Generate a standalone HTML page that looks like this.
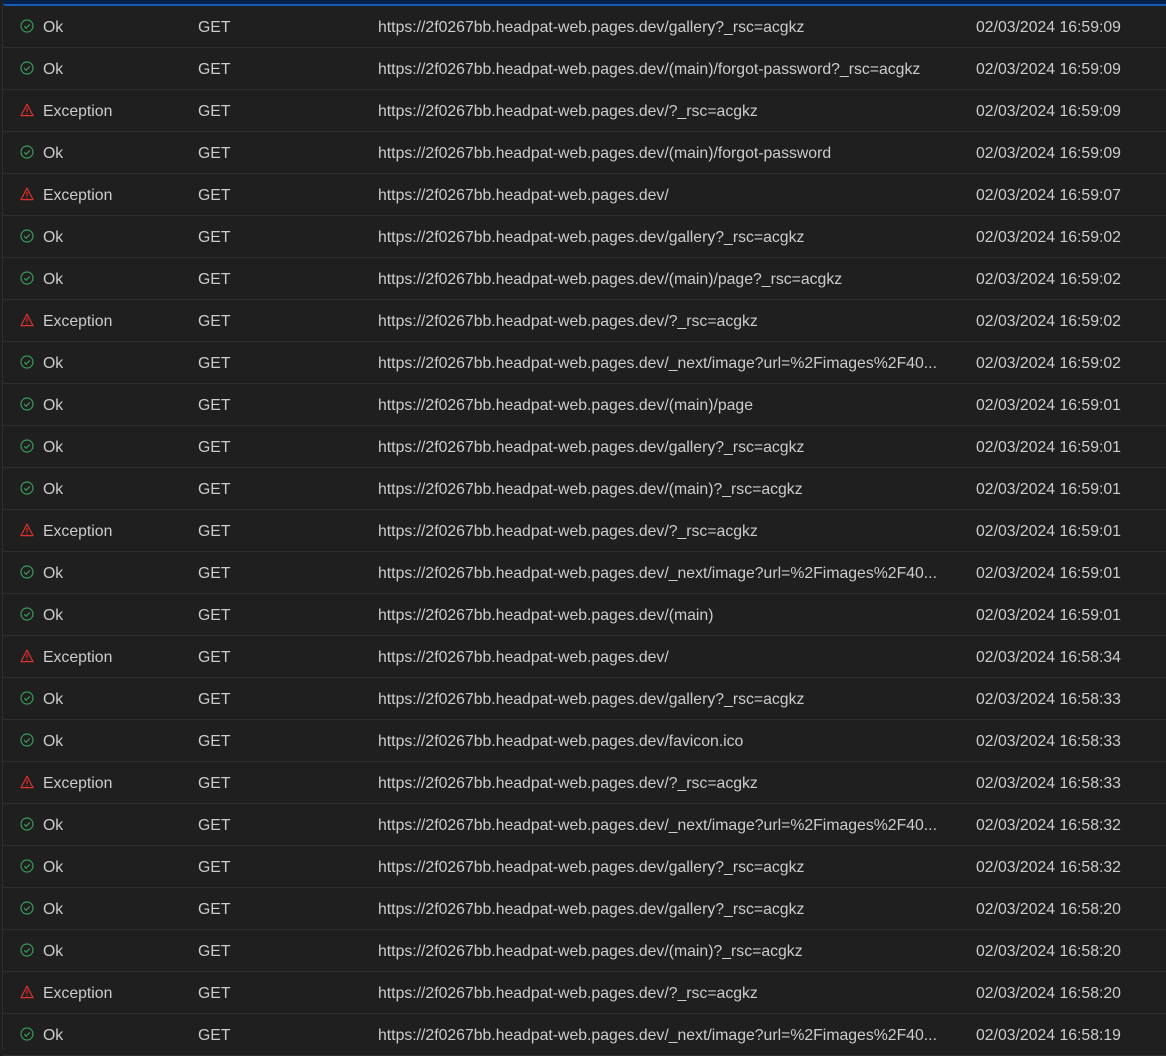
<!DOCTYPE html>
<html><head><meta charset="utf-8"><style>
*{margin:0;padding:0;box-sizing:border-box}
body{width:1166px;height:1049px;overflow:hidden;background:#1f1f1f;font-family:"Liberation Sans",sans-serif;font-size:15.8px;color:#cccccc;position:relative}
.top{position:absolute;left:3px;right:0;top:0;height:6px;background:#04214a;border-bottom:2px solid #1e5bb8;border-bottom-left-radius:3px}
.vl{position:absolute;left:2px;top:6px;bottom:0;width:1px;background:#2e2e2e}
.row{position:absolute;left:3px;right:0;height:42px;border-bottom:1px solid #2e2e2e}
.row span{position:absolute;top:13px;white-space:nowrap}
.ic{position:absolute;left:17px;top:13px;width:14px;height:14px}
</style></head><body>
<div class="top"></div><div class="vl"></div>
<div id="rows"></div>
<script>
var ok='<svg class="ic" viewBox="0 0 14 14"><circle cx="7" cy="7" r="6" fill="none" stroke="#3a9a5a" stroke-width="1.2"/><path d="M4.2 7.2l2 2 3.6-3.8" fill="none" stroke="#3a9a5a" stroke-width="1.2"/></svg>';
var ex='<svg class="ic" viewBox="0 0 14 14"><path d="M7 1.2L13 12.6H1Z" fill="none" stroke="#e03030" stroke-width="1.2" stroke-linejoin="round"/><path d="M7 5v4M7 10.3v1.2" stroke="#e03030" stroke-width="1.2"/></svg>';
var B="https://2f0267bb.headpat-web.pages.dev/";
var d=[
[1,"gallery?_rsc=acgkz","16:59:09"],[1,"(main)/forgot-password?_rsc=acgkz","16:59:09"],[0,"?_rsc=acgkz","16:59:09"],[1,"(main)/forgot-password","16:59:09"],[0,"","16:59:07"],[1,"gallery?_rsc=acgkz","16:59:02"],[1,"(main)/page?_rsc=acgkz","16:59:02"],[0,"?_rsc=acgkz","16:59:02"],[1,"_next/image?url=%2Fimages%2F40...","16:59:02"],[1,"(main)/page","16:59:01"],[1,"gallery?_rsc=acgkz","16:59:01"],[1,"(main)?_rsc=acgkz","16:59:01"],[0,"?_rsc=acgkz","16:59:01"],[1,"_next/image?url=%2Fimages%2F40...","16:59:01"],[1,"(main)","16:59:01"],[0,"","16:58:34"],[1,"gallery?_rsc=acgkz","16:58:33"],[1,"favicon.ico","16:58:33"],[0,"?_rsc=acgkz","16:58:33"],[1,"_next/image?url=%2Fimages%2F40...","16:58:32"],[1,"gallery?_rsc=acgkz","16:58:32"],[1,"gallery?_rsc=acgkz","16:58:20"],[1,"(main)?_rsc=acgkz","16:58:20"],[0,"?_rsc=acgkz","16:58:20"],[1,"_next/image?url=%2Fimages%2F40...","16:58:19"]];
var h='';
d.forEach(function(r,i){h+='<div class="row" style="top:'+(6+42*i)+'px">'+(r[0]?ok:ex)+'<span style="left:40px">'+(r[0]?'Ok':'Exception')+'</span><span style="left:195px">GET</span><span style="left:375px">'+B+r[1]+'</span><span style="left:973px">02/03/2024 '+r[2]+'</span></div>';});
document.getElementById('rows').innerHTML=h;
</script>
</body></html>
